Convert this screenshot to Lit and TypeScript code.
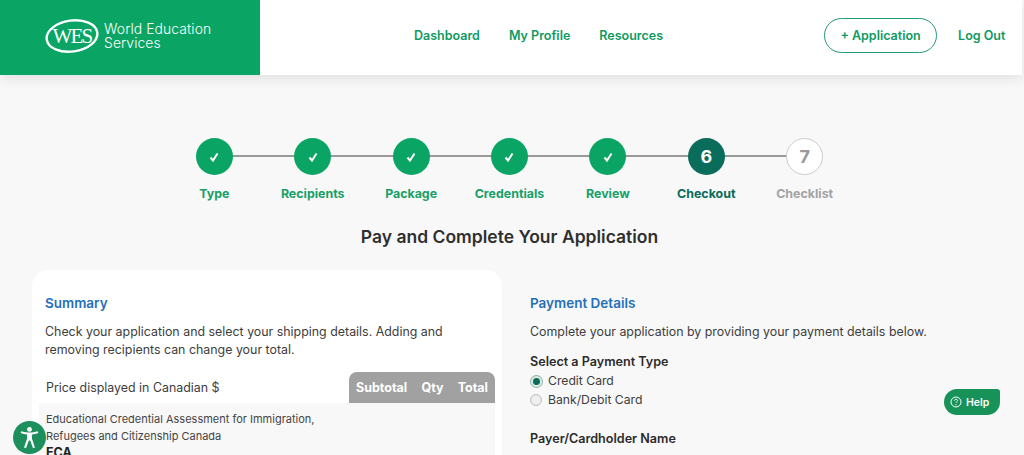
import { LitElement, html, css } from "lit";
import { customElement } from "lit/decorators.js";

const steps = ["Type", "Recipients", "Package", "Credentials", "Review", "Checkout", "Checklist"];

@customElement("app-root")
export class AppRoot extends LitElement {
  static styles = css`
    :host { display: block; width: 1024px; height: 455px; overflow: hidden; position: relative; background: #f8f8f8; font-family: Inter, "Noto Sans", sans-serif; color: #333; }
    * { box-sizing: border-box; }
    header { display: flex; height: 75px; width: 1022px; background: #fff; align-items: flex-start; box-shadow: 0 4px 12px rgba(0,0,0,.09); position: relative; }
    .brand { width: 260px; height: 75px; background: #0aa565; display: flex; align-items: center; padding: 0 0 4px 45px; gap: 5px; color: #fff; flex: none; }
    .brand svg { width: 54px; height: 36px; flex: none; }
    .brand span { font-size: 13.9px; line-height: 14px; letter-spacing: .1px; font-weight: 300; }
    nav { display: flex; gap: 29px; margin: 28px 0 0 154px; }
    a { color: #0f9a62; font-weight: 600; font-size: 12.5px; line-height: 15px; white-space: nowrap; }
    .cta { margin: 18px 0 0 161px; width: 113px; height: 35px; border: 1.5px solid #1f9c70; border-radius: 18px; display: flex; align-items: center; justify-content: center; }
    .logout { margin: 28px 0 0 21px; }
    .stepper { display: flex; justify-content: center; margin-top: 63px; padding-right: 5px; }
    .step { width: 98.4px; display: flex; flex-direction: column; align-items: center; position: relative; }
    .step:not(:last-child)::after { content: ""; position: absolute; left: 50%; width: 100%; top: 17px; height: 2px; background: #999; }
    .dot { width: 37px; height: 37px; border-radius: 50%; background: #0aa565; color: #fff; display: flex; align-items: center; justify-content: center; font-weight: 700; font-size: 18px; position: relative; z-index: 1; }
    .dot svg { width: 12px; height: 12px; }
    .label { margin-top: 11px; font-size: 12.4px; line-height: 16px; font-weight: 700; color: #17a068; white-space: nowrap; }
    .step.cur .dot { background: #0a6c5a; }
    .step.cur .label { color: #0a6c5a; }
    .step.todo .dot { background: #fff; border: 1.5px solid #ccc; color: #999; }
    .step.todo .label { color: #a3a3a3; }
    h1 { margin: 25px 0 0; font-size: 17.5px; line-height: 20px; font-weight: 600; text-align: center; padding-right: 5px; color: #2f2f2f; }
    .cols { display: flex; margin: 23px 0 0 32px; }
    .card { width: 470px; height: 300px; background: #fff; border-radius: 16px 16px 0 0; padding: 25px 7px 0; flex: none; }
    h2 { margin: 0; font-size: 13.5px; line-height: 17px; font-weight: 600; color: #2470b8; }
    .card h2 { margin-left: 6px; }
    p { margin: 0; font-size: 12.4px; line-height: 18px; color: #3d3d3d; }
    .card p { margin: 11px 0 0 6px; }
    .row { display: flex; justify-content: space-between; margin-top: 13px; height: 31px; align-items: center; }
    .row > span { font-size: 12.4px; margin-left: 7px; color: #3d3d3d; }
    .th { width: 146px; height: 31px; background: #a1a1a1; color: #fff; border-radius: 8px 8px 0 0; display: flex; align-items: center; justify-content: space-between; padding: 0 7px; font-size: 12.5px; font-weight: 700; }
    .body { background: #f8f8f8; padding: 8px 7px 0; height: 80px; font-size: 11px; line-height: 17px; color: #444; white-space: nowrap; }
    .body b { display: block; font-size: 12.5px; line-height: 17px; color: #222; font-weight: 700; margin-top: -1px; }
    .pay { margin-left: 28px; padding-top: 25px; width: 440px; }
    .pay p { margin-top: 11px; white-space: nowrap; }
    .sub { margin-top: 13px; font-size: 12.6px; line-height: 16px; font-weight: 600; color: #2b2b2b; }
    .radio { display: flex; align-items: center; gap: 6px; font-size: 12.2px; line-height: 18.5px; color: #3d3d3d; }
    .sub + .radio { margin-top: 2px; }
    .r { width: 12px; height: 12px; border-radius: 50%; background: #eee; border: 1px solid #bbb; flex: none; }
    .r.on { background: #0a6c5a; border: 2px solid #dfe9e6; box-shadow: 0 0 0 1px #8fb5aa; width: 11px; height: 11px; margin: 0 .5px; }
    .pay .sub.n { margin-top: 22px; }
    .help { position: absolute; left: 944px; top: 389px; width: 56px; height: 26px; background: #17935a; color: #fff; border-radius: 13px 3px 13px 13px; display: flex; align-items: center; gap: 4px; padding-left: 6px; font-size: 10.5px; font-weight: 600; }
    .help svg { width: 12px; height: 12px; }
    .a11y { position: absolute; left: 13px; top: 421px; width: 33px; height: 33px; border-radius: 50%; background: #1c8f5c; display: flex; align-items: center; justify-content: center; }
    .a11y svg { width: 25px; height: 25px; }
  `;

  private check() {
    return html`<svg viewBox="0 0 12 12"><path d="M2.5 6.500 5 9.500 9.500 2.500" fill="none" stroke="#fff" stroke-width="2"/></svg>`;
  }

  render() {
    return html`
      <header>
        <div class="brand">
          <svg viewBox="0 0 54 36">
            <ellipse cx="27" cy="18" rx="25.500" ry="15.500" transform="rotate(-8 27 18)" fill="none" stroke="#fff" stroke-width="2.400"/>
            <text x="27" y="25" text-anchor="middle" font-family="Liberation Serif, serif" font-size="21" letter-spacing="-1.800" fill="#fff">WES</text>
          </svg>
          <span>World Education<br />Services</span>
        </div>
        <nav><a>Dashboard</a><a>My Profile</a><a>Resources</a></nav>
        <a class="cta">+ Application</a>
        <a class="logout">Log Out</a>
      </header>
      <div class="stepper">
        ${steps.map((s, i) => html`
          <div class="step ${i === 5 ? "cur" : i === 6 ? "todo" : ""}">
            <div class="dot">${i < 5 ? this.check() : i + 1}</div>
            <div class="label">${s}</div>
          </div>`)}
      </div>
      <h1>Pay and Complete Your Application</h1>
      <div class="cols">
        <section class="card">
          <h2>Summary</h2>
          <p>Check your application and select your shipping details. Adding and removing recipients can change your total.</p>
          <div class="row">
            <span>Price displayed in Canadian $</span>
            <div class="th"><span>Subtotal</span><span>Qty</span><span>Total</span></div>
          </div>
          <div class="body">Educational Credential Assessment for Immigration,<br />Refugees and Citizenship Canada<b>ECA</b></div>
        </section>
        <section class="pay">
          <h2>Payment Details</h2>
          <p>Complete your application by providing your payment details below.</p>
          <div class="sub">Select a Payment Type</div>
          <div class="radio"><i class="r on"></i>Credit Card</div>
          <div class="radio"><i class="r"></i>Bank/Debit Card</div>
          <div class="sub n">Payer/Cardholder Name</div>
        </section>
      </div>
      <div class="help">
        <svg viewBox="0 0 12 12"><circle cx="6" cy="6" r="5" fill="none" stroke="#fff"/><path d="M4.500 4.700C4.600 3.700 5.200 3.300 6 3.300c.9 0 1.500.5 1.500 1.300 0 1.200-1.500 1.200-1.500 2.400" fill="none" stroke="#fff" stroke-width=".9"/><circle cx="6" cy="8.700" r=".6" fill="#fff"/></svg>
        Help
      </div>
      <div class="a11y">
        <svg viewBox="0 0 24 24" fill="#fff"><circle cx="12" cy="4.200" r="2.300"/><path d="M3.500 7.600l.6-1.700c2.600.9 5.200 1.300 7.900 1.300s5.300-.4 7.900-1.300l.6 1.700c-2 .8-4 1.200-6.200 1.400v4l2.900 8.700-1.800.6-2.700-7.500h-1.400l-2.700 7.500-1.800-.6 2.900-8.700v-4c-2.200-.2-4.200-.6-6.200-1.400z"/></svg>
      </div>
    `;
  }
}
